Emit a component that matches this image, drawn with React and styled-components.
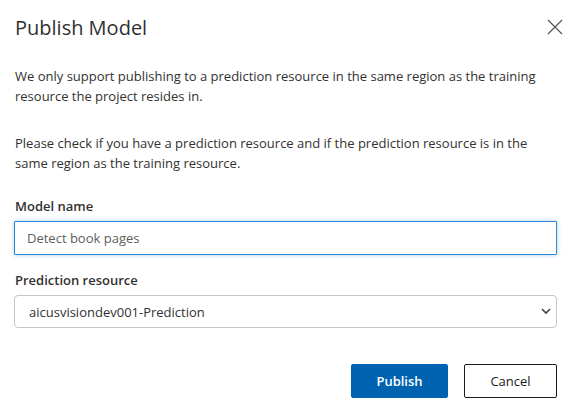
import styled, { createGlobalStyle } from "styled-components";

const GlobalStyle = createGlobalStyle`
    body {
        margin: 0;
        background: #ffffff;
        font-family: "Segoe UI", "Open Sans", "Noto Sans", sans-serif;
        color: #323130;
    }
`;

const Dialog = styled.div`
    width: 574px;
    height: 409px;
    box-sizing: border-box;
    padding: 0 17px 0 14px;
    display: flex;
    flex-direction: column;
`;

const Header = styled.div`
    display: flex;
    justify-content: space-between;
    align-items: center;
    height: 54px;
    padding-left: 1px;
`;

const Title = styled.h1`
    margin: 0;
    font-size: 20px;
    font-weight: 400;
    color: #323130;
`;

const CloseButton = styled.button`
    border: none;
    background: none;
    padding: 0;
    width: 20px;
    height: 20px;
    margin-right: -8px;
    display: flex;
    align-items: center;
    justify-content: center;
    color: #555;
    cursor: pointer;
`;

const Text = styled.p`
    margin: ${(p) => p.$mt || 0}px 0 0 1px;
    font-size: 13px;
    line-height: 20px;
    color: #323130;
`;

const Label = styled.label`
    display: block;
    margin: ${(p) => p.$mt}px 0 ${(p) => p.$mb}px 1px;
    font-size: 13px;
    font-weight: 600;
    line-height: 18px;
    color: #323130;
`;

const Input = styled.input`
    box-sizing: border-box;
    width: 100%;
    height: 34px;
    padding: 0 12px;
    border: 1px solid #2b88d8;
    border-radius: 1px;
    box-shadow: 0 0 4px rgba(43, 136, 216, 0.4);
    font: inherit;
    font-size: 13px;
    color: #605e5c;
    outline: none;
`;

const SelectWrap = styled.div`
    position: relative;
`;

const Select = styled.select`
    box-sizing: border-box;
    width: 100%;
    height: 33px;
    padding: 0 28px 0 14px;
    border: 1px solid #c8c6c4;
    border-radius: 4px;
    background: #fff;
    appearance: none;
    font: inherit;
    font-size: 13px;
    color: #323130;
`;

const Chevron = styled.svg`
    position: absolute;
    right: 6px;
    top: 12px;
    pointer-events: none;
`;

const Footer = styled.div`
    display: flex;
    justify-content: flex-end;
    gap: 16px;
    margin-top: 36px;
`;

const Button = styled.button`
    box-sizing: border-box;
    height: 34px;
    width: ${(p) => p.$w}px;
    border-radius: 2px;
    font: inherit;
    font-size: 13px;
    font-weight: ${(p) => (p.$primary ? 600 : 400)};
    border: 1px solid ${(p) => (p.$primary ? "#0063b1" : "#1b1a19")};
    background: ${(p) => (p.$primary ? "#0063b1" : "#ffffff")};
    color: ${(p) => (p.$primary ? "#ffffff" : "#1b1a19")};
    cursor: pointer;
`;

const App = () => {
    return (
        <>
            <GlobalStyle />
            <Dialog>
                <Header>
                    <Title>Publish Model</Title>
                    <CloseButton aria-label="Close">
                        <svg width="16" height="16" viewBox="0 0 16 16">
                            <path d="M1 1 L15 15 M15 1 L1 15" stroke="#555" strokeWidth="1.2" />
                        </svg>
                    </CloseButton>
                </Header>

                <Text $mt={12}>
                    We only support publishing to a prediction resource in the same region as the training
                    resource the project resides in.
                </Text>
                <Text $mt={27}>
                    Please check if you have a prediction resource and if the prediction resource is in the
                    same region as the training resource.
                </Text>

                <Label $mt={24} $mb={6}>Model name</Label>
                <Input defaultValue="Detect book pages" />

                <Label $mt={16} $mb={6}>Prediction resource</Label>
                <SelectWrap>
                    <Select defaultValue="pred">
                        <option value="pred">aicusvisiondev001-Prediction</option>
                    </Select>
                    <Chevron width="10" height="8" viewBox="0 0 10 8">
                        <path d="M1 2 L5 6 L9 2" fill="none" stroke="#444" strokeWidth="1.6" />
                    </Chevron>
                </SelectWrap>

                <Footer>
                    <Button $primary $w={97}>Publish</Button>
                    <Button $w={93}>Cancel</Button>
                </Footer>
            </Dialog>
        </>
    );
};

export default App;
